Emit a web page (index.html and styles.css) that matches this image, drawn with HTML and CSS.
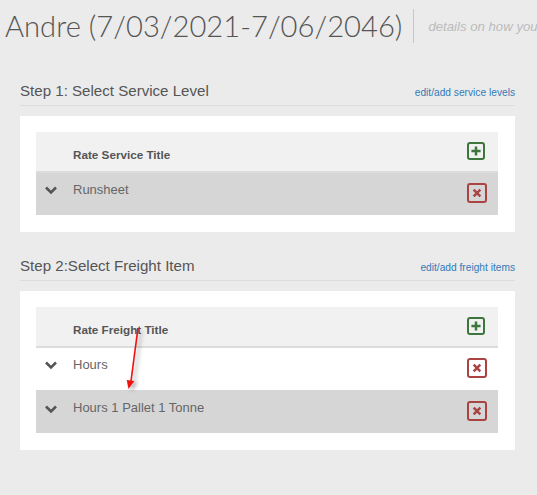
FILE: index.html
```html
<!DOCTYPE html>
<html lang="en">
<head>
    <meta charset="UTF-8">
    <title>Andre rates</title>
    <link rel="stylesheet" href="styles.css">
</head>
<body>
    <div class="page-header">
        <h1>Andre (7/03/2021-7/06/2046)</h1>
        <span class="page-note">details on how you</span>
    </div>

    <section class="step">
        <div class="step-title">
            <h2>Step 1: Select Service Level</h2>
            <a href="#">edit/add service levels</a>
        </div>
        <div class="panel">
            <div class="row head">
                <span class="row-label">Rate Service Title</span>
                <button class="icon-btn add"><svg viewBox="0 0 12 12"><path d="M6 .5v11M.5 6h11"/></svg></button>
            </div>
            <div class="row grey">
                <svg class="chevron" viewBox="0 0 14 10"><path d="M2 2.5l5 5 5-5"/></svg>
                <span class="row-label">Runsheet</span>
                <button class="icon-btn del"><svg viewBox="0 0 12 12"><path d="M2 2l8 8M10 2l-8 8"/></svg></button>
            </div>
        </div>
    </section>

    <section class="step">
        <div class="step-title">
            <h2>Step 2:Select Freight Item</h2>
            <a href="#">edit/add freight items</a>
        </div>
        <div class="panel">
            <div class="row head">
                <span class="row-label">Rate Freight Title</span>
                <button class="icon-btn add"><svg viewBox="0 0 12 12"><path d="M6 .5v11M.5 6h11"/></svg></button>
            </div>
            <div class="row">
                <svg class="chevron" viewBox="0 0 14 10"><path d="M2 2.5l5 5 5-5"/></svg>
                <span class="row-label">Hours</span>
                <button class="icon-btn del"><svg viewBox="0 0 12 12"><path d="M2 2l8 8M10 2l-8 8"/></svg></button>
            </div>
            <div class="row grey">
                <svg class="chevron" viewBox="0 0 14 10"><path d="M2 2.5l5 5 5-5"/></svg>
                <span class="row-label">Hours 1 Pallet 1 Tonne</span>
                <button class="icon-btn del"><svg viewBox="0 0 12 12"><path d="M2 2l8 8M10 2l-8 8"/></svg></button>
            </div>
        </div>
    </section>

    <!-- red annotation arrow drawn over the table -->
    <svg class="arrow" width="20" height="70" viewBox="0 0 20 70">
        <path d="M13 3L6 56" stroke="#f01010" stroke-width="1.6" fill="none"/>
        <path d="M1.700 55l7.600 1-5.800 8z" fill="#f01010"/>
    </svg>
</body>
</html>
```

FILE: styles.css
```css
html, body {
    height: 100%;
}
body {
    margin: 0;
    padding: 0 22px 0 20px;
    background-color: #ebebeb;
    color: #555;
    font-family: "Liberation Sans", Arial, sans-serif;
    overflow: hidden;
    position: relative;
}
.page-header {
    display: flex;
    align-items: center;
    height: 34px;
    margin: 9px -22px 0 -15px;
    white-space: nowrap;
}
.page-header h1 {
    margin: 0;
    padding-right: 11px;
    border-right: 1px solid #c8c8c8;
    font-family: Lato, sans-serif;
    font-weight: 300;
    font-size: 29.2px;
    line-height: 34px;
    color: #555;
}
.page-note {
    margin-left: 14px;
    font-size: 13.2px;
    font-style: italic;
    color: #bbb;
}
.step {
    margin-top: 37px;
}
.step + .step {
    margin-top: 23px;
}
.step-title {
    display: flex;
    justify-content: space-between;
    align-items: baseline;
    height: 25px;
    border-bottom: 1px solid #ddd;
}
.step-title h2 {
    margin: 0;
    font-size: 15.1px;
    font-weight: normal;
    line-height: 21px;
    color: #555;
}
.step-title a {
    font-size: 10.2px;
    color: #337ab7;
    text-decoration: none;
}
.panel {
    margin-top: 10px;
    padding: 16px 17px 17px 16px;
    background: white;
}
.row {
    display: flex;
    align-items: center;
    height: 43px;
    padding: 0 11px 0 8px;
    font-size: 13px;
    color: #666;
}
.head + .row {
    height: 44px;
}
.row.grey {
    background-color: #d6d6d6;
}
.row.head {
    height: 39px;
    padding-left: 37px;
    background-color: #f1f1f1;
    box-shadow: 0 2px 0 #dcdcdc;
    font-size: 11.7px;
    font-weight: bold;
    color: #555;
    position: relative;
}
.row.head .row-label {
    margin: 5px 0 0;
}
.row-label {
    margin-bottom: 8px;
}
.chevron {
    flex: none;
    width: 14px;
    height: 10px;
    margin: 0 15px 6px 0;
}
.chevron path {
    fill: none;
    stroke: #555;
    stroke-width: 2.600;
}
.icon-btn {
    flex: none;
    box-sizing: border-box;
    margin-left: auto;
    padding: 0;
    background: none;
    border: 2px solid;
    border-radius: 3px;
    display: flex;
    align-items: center;
    justify-content: center;
}
.icon-btn svg {
    width: 10px;
    height: 10px;
}
.icon-btn path {
    fill: none;
    stroke-width: 3;
}
.icon-btn.add {
    width: 18px;
    height: 18px;
    margin: 0 2px 1px auto;
    border-color: #3c763d;
}
.icon-btn.add path {
    stroke: #3c763d;
}
.icon-btn.del {
    width: 20px;
    height: 20px;
    border-color: #a94442;
}
.row + .row + .row .icon-btn.del {
    margin-bottom: 1px;
}
.icon-btn.del path {
    stroke: #a94442;
}
.arrow {
    position: absolute;
    left: 125px;
    top: 325px;
    filter: drop-shadow(3px 2px 2px rgba(0,0,0,0.35));
}
```
